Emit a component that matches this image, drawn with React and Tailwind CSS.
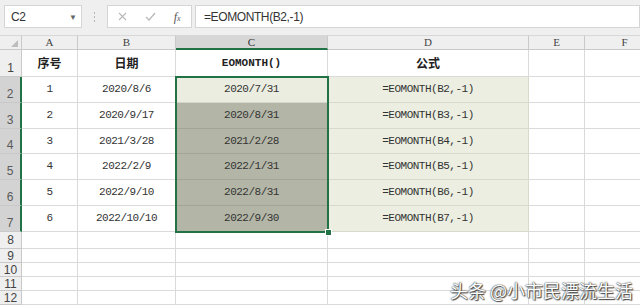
import React from "react";

const COLS = [
  { key: "A", w: 56 },
  { key: "B", w: 98 },
  { key: "C", w: 152 },
  { key: "D", w: 201 },
  { key: "E", w: 56 },
  { key: "F", w: 80 },
];

const DATA = [
  ["1", "2020/8/6", "2020/7/31", "=EOMONTH(B2,-1)"],
  ["2", "2020/9/17", "2020/8/31", "=EOMONTH(B3,-1)"],
  ["3", "2021/3/28", "2021/2/28", "=EOMONTH(B4,-1)"],
  ["4", "2022/2/9", "2022/1/31", "=EOMONTH(B5,-1)"],
  ["5", "2022/9/10", "2022/8/31", "=EOMONTH(B6,-1)"],
  ["6", "2022/10/10", "2022/9/30", "=EOMONTH(B7,-1)"],
];

const DATA_H = [26, 26, 25, 26, 26, 26];
const EMPTY = [
  { n: 8, h: 17 },
  { n: 9, h: 14 },
  { n: 10, h: 14 },
  { n: 11, h: 14 },
  { n: 12, h: 14 },
];

const mono = "font-['Liberation_Mono','DejaVu_Sans_Mono',monospace] tracking-[-0.5px]";

function RowHeader({ n, h, selected, bottom }) {
  return (
    <div
      className={`w-[22px] shrink-0 flex justify-center border-b border-[#c9c9c9] text-[12px] font-['Liberation_Sans',sans-serif] leading-none ${
        selected
          ? "bg-[#d3d3d3] border-r-2 border-r-[#217346] text-[#5a5a5a]"
          : "bg-[#efefef] border-r border-r-[#c9c9c9] text-[#444]"
      } ${bottom ? "items-end pb-[2px]" : "items-center"}`}
      style={{ height: h }}
    >
      {n}
    </div>
  );
}

export default function App() {
  return (
    <div className="relative w-[640px] h-[306px] overflow-hidden bg-white">
      {/* formula toolbar */}
      <div className="h-[35px] bg-[#efefef] flex items-start pt-[5px] pl-[4px]">
        <div className="w-[78px] h-[23px] bg-white border border-[#d5d5d5] flex items-center justify-between pl-[6px] pr-[4px]">
          <span className="text-[12px] tracking-[-0.4px] text-[#333] font-['Liberation_Sans',sans-serif]">C2</span>
          <span className="text-[8px] text-[#666] leading-none">▼</span>
        </div>
        <div className="w-[25px] h-[23px] flex items-center justify-center">
          <div className="flex flex-col gap-[2px]">
            <span className="w-[1px] h-[2px] bg-[#b5b5b5]" />
            <span className="w-[1px] h-[2px] bg-[#b5b5b5]" />
            <span className="w-[1px] h-[2px] bg-[#b5b5b5]" />
          </div>
        </div>
        <div className="w-[85px] h-[23px] bg-white border border-[#d5d5d5] flex items-center">
          <span className="w-[30px] flex justify-center">
            <svg width="9" height="9" viewBox="0 0 9 9" stroke="#b8b8b8" strokeWidth="1.1">
              <path d="M1 1 L8 8 M8 1 L1 8" />
            </svg>
          </span>
          <span className="w-[26px] flex justify-center">
            <svg width="11" height="9" viewBox="0 0 11 9" stroke="#b8b8b8" strokeWidth="1.2" fill="none">
              <path d="M1 5 L4 8 L10 1" />
            </svg>
          </span>
          <span className="w-[28px] flex justify-center items-end text-[12px] leading-none italic text-[#555] font-['Liberation_Serif',serif]">
            f<span className="text-[8px] leading-none">x</span>
          </span>
        </div>
        <div className="ml-[3px] flex-1 h-[23px] bg-white border border-[#d5d5d5] flex items-center pl-[8px]">
          <span className="text-[12px] tracking-[-0.4px] text-[#333] font-['Liberation_Sans',sans-serif]">=EOMONTH(B2,-1)</span>
        </div>
      </div>

      {/* column headers */}
      <div className="flex h-[15px]">
        <div className="w-[22px] shrink-0 bg-[#efefef] border-r border-b border-[#c9c9c9] border-t border-t-[#d8d8d8] relative">
          <svg className="absolute right-[3px] bottom-[2px]" width="7" height="7" viewBox="0 0 7 7">
            <path d="M7 0 L7 7 L0 7 Z" fill="#bdbdbd" />
          </svg>
        </div>
        {COLS.map((c) => (
          <div
            key={c.key}
            className={`shrink-0 flex items-center justify-center text-[11px] leading-none font-['Liberation_Serif',serif] border-r border-[#c9c9c9] border-t border-t-[#d8d8d8] ${
              c.key === "C"
                ? "bg-[#d6d6d6] border-b-2 border-b-[#217346] text-[#333]"
                : "bg-[#efefef] border-b border-b-[#c9c9c9] text-[#444]"
            }`}
            style={{ width: c.w }}
          >
            {c.key}
          </div>
        ))}
      </div>

      {/* row 1 */}
      <div className="flex h-[27px]">
        <RowHeader n={1} h={27} bottom />
        <div className="w-[56px] shrink-0 border-r border-b border-[#dadada] flex items-center justify-center text-[12px] font-bold text-[#222] font-['Noto_Sans_CJK_SC',sans-serif]">序号</div>
        <div className="w-[98px] shrink-0 border-r border-b border-[#dadada] flex items-center justify-center text-[12px] font-bold text-[#222] font-['Noto_Sans_CJK_SC',sans-serif]">日期</div>
        <div className="w-[152px] shrink-0 border-r border-b border-[#dadada] flex items-center justify-center text-[11px] font-bold text-[#222] font-['Liberation_Mono',monospace]">EOMONTH()</div>
        <div className="w-[201px] shrink-0 border-r border-b border-[#dadada] flex items-center justify-center text-[12px] font-bold text-[#222] font-['Noto_Sans_CJK_SC',sans-serif]">公式</div>
        <div className="w-[56px] shrink-0 border-r border-b border-[#dadada]" />
        <div className="w-[80px] shrink-0 border-r border-b border-[#dadada]" />
      </div>

      {/* data rows */}
      {DATA.map((r, i) => (
        <div key={i} className="flex" style={{ height: DATA_H[i] }}>
          <RowHeader n={i + 2} h={DATA_H[i]} selected bottom />
          <div className={`w-[56px] shrink-0 border-r border-b border-[#dadada] flex items-center justify-center text-[11px] text-[#333] ${mono}`}>{r[0]}</div>
          <div className={`w-[98px] shrink-0 border-r border-b border-[#dadada] flex items-center justify-center text-[11px] text-[#333] ${mono}`}>{r[1]}</div>
          <div
            className={`w-[152px] shrink-0 border-r border-b flex items-center justify-center text-[11px] text-[#333] ${mono} ${
              i === 0 ? "bg-[#eaeddf] border-[#d3d6c8]" : "bg-[#b3b6a7] border-[#a3a697]"
            }`}
          >
            {r[2]}
          </div>
          <div className={`w-[201px] shrink-0 border-r border-b border-[#d6d9cb] bg-[#ebeee0] flex items-center justify-center text-[11px] text-[#333] ${mono}`}>{r[3]}</div>
          <div className="w-[56px] shrink-0 border-r border-b border-[#dadada]" />
          <div className="w-[80px] shrink-0 border-r border-b border-[#dadada]" />
        </div>
      ))}

      {/* empty rows */}
      {EMPTY.map((r) => (
        <div key={r.n} className="flex" style={{ height: r.h }}>
          <RowHeader n={r.n} h={r.h} bottom={r.n === 8} />
          {COLS.map((c) => (
            <div key={c.key} className="shrink-0 border-r border-b border-[#dadada]" style={{ width: c.w }} />
          ))}
        </div>
      ))}

      {/* selection border */}
      <div className="absolute left-[175px] top-[76px] w-[154px] h-[157px] border-2 border-[#217346] pointer-events-none" />
      <div className="absolute left-[325px] top-[229px] w-[7px] h-[7px] bg-[#217346] border border-white" />

      {/* watermark */}
      <div className="absolute right-[7px] bottom-[7px] text-[18px] leading-none text-white font-['Noto_Sans_CJK_SC',sans-serif] [text-shadow:0_0_1px_#333,0_0_2px_#555,1px_1px_1px_#444]">
        头条 @小市民漂流生活
      </div>
    </div>
  );
}
